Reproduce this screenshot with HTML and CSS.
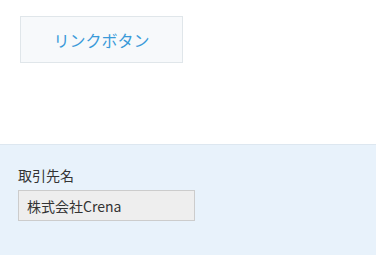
FILE: index.html
```html
<!DOCTYPE html>
<html lang="ja">
<head>
    <meta charset="UTF-8">
    <meta name="viewport" content="width=device-width, initial-scale=1.0">
    <title>リンクボタン</title>
    <link rel="stylesheet" href="styles.css">
</head>
<body>
    <div class="top">
        <a class="link-button" href="#">リンクボタン</a>
    </div>

    <div class="panel">
        <label class="field-label" for="clientName">取引先名</label>
        <input class="field-input" type="text" id="clientName" value="株式会社Crena" readonly>
    </div>
</body>
</html>
```

FILE: styles.css
```css
body {
    font-family: "Noto Sans CJK JP", "Noto Sans", sans-serif;
    margin: 0;
    padding: 0;
    background-color: #fff;
    color: #333;
}
.top {
    height: 144px;
    box-sizing: border-box;
    padding: 16px 20px;
}
.link-button {
    display: flex;
    align-items: center;
    justify-content: center;
    width: 163px;
    height: 47px;
    box-sizing: border-box;
    border: 1px solid #e0e6ea;
    background-color: #f7f9fb;
    color: #3a9ad9;
    font-size: 16px;
    text-decoration: none;
}
.panel {
    height: 111px;
    box-sizing: border-box;
    border-top: 1px solid #dde7f0;
    background-color: #e8f2fb;
    padding: 20px 18px;
    display: flex;
    flex-direction: column;
    align-items: flex-start;
}
.field-label {
    font-size: 14px;
    line-height: 20px;
    margin-bottom: 5px;
}
.field-input {
    width: 177px;
    height: 31px;
    box-sizing: border-box;
    border: 1px solid #ccc;
    background-color: #eee;
    padding: 0 8px;
    font-family: inherit;
    font-size: 14px;
    color: #333;
    outline: none;
}
```
